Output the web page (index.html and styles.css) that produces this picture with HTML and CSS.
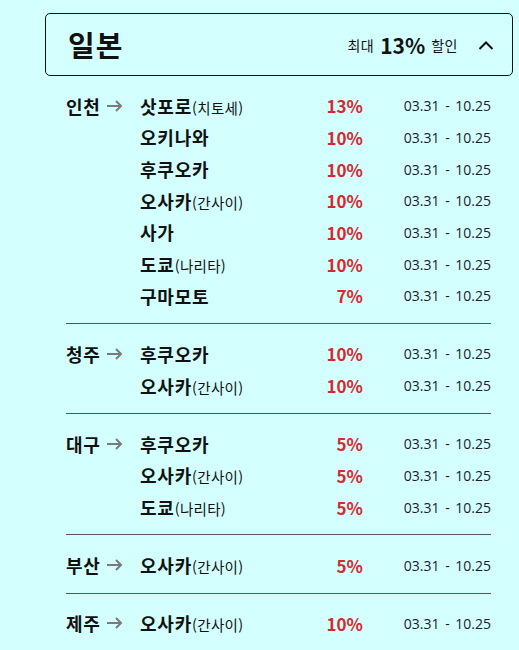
FILE: index.html
```html
<!DOCTYPE html>
<html lang="ko">
<head>
<meta charset="utf-8">
<link rel="stylesheet" href="styles.css">
</head>
<body>
<div class="wrap">
  <div class="head">
    <div class="country">일본</div>
    <div class="summary">
      <span class="small">최대</span>
      <span class="big">13%</span>
      <span class="small">할인</span>
      <svg class="chev" width="16" height="10" viewBox="0 0 16 10"><path d="M1.5 9 L8 2.5 L14.5 9" fill="none" stroke="#111" stroke-width="2"/></svg>
    </div>
  </div>

  <div class="group">
    <div class="row">
      <div class="city">인천<svg class="arrow" width="16" height="12" viewBox="0 0 16 12"><path d="M0 6 H14 M9 1 L14 6 L9 11" fill="none" stroke="#7a7a7a" stroke-width="2"/></svg></div>
      <div class="dest">삿포로<span class="sub">(치토세)</span></div>
      <div class="pct">13%</div>
      <div class="date">03.31 - 10.25</div>
    </div>
    <div class="row">
      <div class="city"></div>
      <div class="dest">오키나와</div>
      <div class="pct">10%</div>
      <div class="date">03.31 - 10.25</div>
    </div>
    <div class="row">
      <div class="city"></div>
      <div class="dest">후쿠오카</div>
      <div class="pct">10%</div>
      <div class="date">03.31 - 10.25</div>
    </div>
    <div class="row">
      <div class="city"></div>
      <div class="dest">오사카<span class="sub">(간사이)</span></div>
      <div class="pct">10%</div>
      <div class="date">03.31 - 10.25</div>
    </div>
    <div class="row">
      <div class="city"></div>
      <div class="dest">사가</div>
      <div class="pct">10%</div>
      <div class="date">03.31 - 10.25</div>
    </div>
    <div class="row">
      <div class="city"></div>
      <div class="dest">도쿄<span class="sub">(나리타)</span></div>
      <div class="pct">10%</div>
      <div class="date">03.31 - 10.25</div>
    </div>
    <div class="row">
      <div class="city"></div>
      <div class="dest">구마모토</div>
      <div class="pct">7%</div>
      <div class="date">03.31 - 10.25</div>
    </div>
  </div>

  <div class="group">
    <div class="row">
      <div class="city">청주<svg class="arrow" width="16" height="12" viewBox="0 0 16 12"><path d="M0 6 H14 M9 1 L14 6 L9 11" fill="none" stroke="#7a7a7a" stroke-width="2"/></svg></div>
      <div class="dest">후쿠오카</div>
      <div class="pct">10%</div>
      <div class="date">03.31 - 10.25</div>
    </div>
    <div class="row">
      <div class="city"></div>
      <div class="dest">오사카<span class="sub">(간사이)</span></div>
      <div class="pct">10%</div>
      <div class="date">03.31 - 10.25</div>
    </div>
  </div>

  <div class="group">
    <div class="row">
      <div class="city">대구<svg class="arrow" width="16" height="12" viewBox="0 0 16 12"><path d="M0 6 H14 M9 1 L14 6 L9 11" fill="none" stroke="#7a7a7a" stroke-width="2"/></svg></div>
      <div class="dest">후쿠오카</div>
      <div class="pct">5%</div>
      <div class="date">03.31 - 10.25</div>
    </div>
    <div class="row">
      <div class="city"></div>
      <div class="dest">오사카<span class="sub">(간사이)</span></div>
      <div class="pct">5%</div>
      <div class="date">03.31 - 10.25</div>
    </div>
    <div class="row">
      <div class="city"></div>
      <div class="dest">도쿄<span class="sub">(나리타)</span></div>
      <div class="pct">5%</div>
      <div class="date">03.31 - 10.25</div>
    </div>
  </div>

  <div class="group">
    <div class="row">
      <div class="city">부산<svg class="arrow" width="16" height="12" viewBox="0 0 16 12"><path d="M0 6 H14 M9 1 L14 6 L9 11" fill="none" stroke="#7a7a7a" stroke-width="2"/></svg></div>
      <div class="dest">오사카<span class="sub">(간사이)</span></div>
      <div class="pct">5%</div>
      <div class="date">03.31 - 10.25</div>
    </div>
  </div>

  <div class="group">
    <div class="row">
      <div class="city">제주<svg class="arrow" width="16" height="12" viewBox="0 0 16 12"><path d="M0 6 H14 M9 1 L14 6 L9 11" fill="none" stroke="#7a7a7a" stroke-width="2"/></svg></div>
      <div class="dest">오사카<span class="sub">(간사이)</span></div>
      <div class="pct">10%</div>
      <div class="date">03.31 - 10.25</div>
    </div>
  </div>
</div>
</body>
</html>
```

FILE: styles.css
```css
html, body {
  margin: 0;
  padding: 0;
  background: #d4ffff;
}
body {
  font-family: "Noto Sans CJK KR", "Noto Sans", sans-serif;
  color: #111;
}
.wrap {
  margin-left: 45px;
  margin-top: 13px;
  width: 468px;
}
.head {
  box-sizing: border-box;
  height: 63px;
  border: 1px solid #111;
  border-radius: 5px;
  display: flex;
  align-items: center;
  justify-content: space-between;
  padding: 0 18px 0 22px;
}
.country {
  font-size: 29px;
  font-weight: 700;
  letter-spacing: 1px;
  line-height: 1;
}
.summary {
  display: flex;
  align-items: center;
  gap: 6px;
}
.small {
  font-size: 14px;
  letter-spacing: 0.5px;
}
.big {
  font-size: 21px;
  font-weight: 700;
}
.chev {
  margin-left: 14px;
}
.group {
  margin: 0 22px 0 21px;
  padding: 14px 0 11.5px;
  border-bottom: 1px solid #555;
}
.group:last-child {
  border-bottom: none;
}
.row {
  display: grid;
  grid-template-columns: 74px 1fr 60px 128px;
  align-items: center;
  height: 31.67px;
}
.city {
  font-size: 18px;
  font-weight: 700;
  letter-spacing: 0.7px;
  display: flex;
  align-items: center;
}
.arrow {
  margin-left: 6px;
}
.dest {
  font-size: 18px;
  font-weight: 700;
  letter-spacing: 0.8px;
  white-space: nowrap;
}
.sub {
  font-size: 14.5px;
  font-weight: 400;
  letter-spacing: 0.3px;
}
.pct {
  font-size: 17px;
  font-weight: 700;
  color: #d8282e;
  text-align: right;
}
.date {
  font-size: 14px;
  color: #1c1c2a;
  text-align: right;
  word-spacing: 2px;
  font-family: "Open Sans", "Noto Sans", sans-serif;
}
```
